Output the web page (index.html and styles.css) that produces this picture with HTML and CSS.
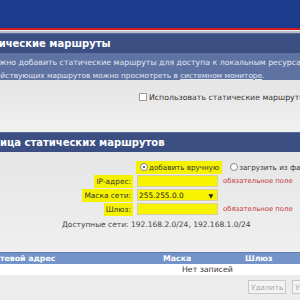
FILE: index.html
```html
<!DOCTYPE html>
<html lang="ru">
<head>
<meta charset="utf-8">
<title>Статические маршруты</title>
<link rel="stylesheet" href="styles.css">
</head>
<body>
<div class="top"></div>
<div class="redline"></div>
<div class="gap"></div>
<section class="sec">
  <h1 class="sec-title">Статические маршруты</h1>
  <div class="sec-desc">
    <p class="d1">Здесь можно добавить статические маршруты для доступа к локальным ресурсам</p>
    <p class="d2">Список действующих маршрутов можно просмотреть в <a href="#">системном мониторе</a>.</p>
  </div>
  <div class="sec-body">
    <label class="check"><span class="cb"></span>Использовать статические маршруты</label>
  </div>
</section>
<section class="sec">
  <h1 class="sec-title t2">Таблица статических маршрутов</h1>
  <div class="form">
    <div class="row">
      <span class="lab"></span>
      <span class="radio hl"><span class="rb on"></span>добавить вручную</span>
      <span class="radio"><span class="rb"></span>загрузить из файла</span>
    </div>
    <div class="row">
      <span class="lab"><span class="hl">IP-адрес:</span></span>
      <span class="inp"></span>
      <span class="req">обязательное поле</span>
    </div>
    <div class="row">
      <span class="lab"><span class="hl">Маска сети:</span></span>
      <span class="inp sel">255.255.0.0<span class="arr">▼</span></span>
    </div>
    <div class="row">
      <span class="lab"><span class="hl">Шлюз:</span></span>
      <span class="inp"></span>
      <span class="req">обязательное поле</span>
    </div>
    <div class="nets">Доступные сети: 192.168.2.0/24, 192.168.1.0/24</div>
  </div>
  <div class="table">
    <div class="thead">
      <span class="c1">Сетевой адрес</span>
      <span class="c2">Маска</span>
      <span class="c3">Шлюз</span>
    </div>
    <div class="tempty">Нет записей</div>
  </div>
  <div class="buttons">
    <button class="btn" disabled>Удалить</button>
    <button class="btn" disabled>Удалить все</button>
  </div>
</section>
</body>
</html>
```
FILE: styles.css
```css
html, body {
  margin: 0;
  padding: 0;
}
body {
  width: 300px;
  height: 300px;
  overflow: hidden;
  background: #ececec;
  font-family: "DejaVu Sans", Verdana, sans-serif;
  font-size: 7.8px;
  color: #333;
}
.top {
  height: 28px;
  background: #1d3b8c;
}
.redline {
  height: 2px;
  background: #d01c1c;
}
.gap {
  height: 1px;
  background: #f2f2f2;
  border-bottom: 2px solid #b9bdc8;
}
.sec-title {
  margin: 0;
  height: 19px;
  line-height: 19px;
  background: #3b4f83;
  color: #fff;
  font-size: 10px;
  font-weight: bold;
  margin-left: -27px;
  white-space: nowrap;
  border-top: 1px solid #5a6b98;
}
.sec-desc {
  background: #5e73a2;
  color: #e3e7f2;
  padding: 3px 0 2px 0;
  height: 22px;
  white-space: nowrap;
}
.sec-desc p {
  margin: 0;
  line-height: 13px;
}
.sec-desc .d1 {
  font-size: 7.8px;
  margin-left: -38px;
}
.sec-desc .d2 {
  font-size: 7.35px;
  margin-left: -39px;
}
.sec-desc a {
  color: #e3e7f2;
}
.sec-body {
  height: 52px;
  background: linear-gradient(#e4e4e4, #f1f1f1);
  padding-left: 139px;
}
.check {
  display: flex;
  align-items: center;
  gap: 2px;
  padding-top: 12px;
  height: 10px;
  white-space: nowrap;
  color: #333;
}
.cb {
  flex: none;
  width: 6px;
  height: 6px;
  border: 1px solid #999;
  background: #fff;
}
.t2 {
  margin-left: -28px;
}
.form {
  padding-top: 8px;
  height: 92px;
  background: linear-gradient(#e6e6e6, #efefef);
  font-size: 7.4px;
}
.row {
  display: flex;
  align-items: center;
  height: 14px;
  gap: 4px;
  white-space: nowrap;
}
.row > * {
  flex: none;
}
.lab {
  width: 133px;
  display: flex;
  justify-content: flex-end;
}
.hl {
  background: #f5f200;
  padding: 2px 2px;
  color: #333;
}
.radio {
  display: flex;
  align-items: center;
  gap: 1px;
  padding: 2px 3px 2px 2px;
  font-size: 7.2px;
}
.radio.hl {
  margin-left: -1px;
  padding: 2px 3px 2px 4px;
}
.radio + .radio {
  margin-left: 2px;
}
.rb {
  width: 6px;
  height: 6px;
  border: 1px solid #888;
  border-radius: 50%;
  background: #fff;
  position: relative;
}
.rb.on::after {
  content: "";
  position: absolute;
  left: 2px;
  top: 2px;
  width: 2px;
  height: 2px;
  background: #333;
  border-radius: 50%;
}
.inp {
  width: 78px;
  height: 10px;
  background: #f8f300;
  border: 1px solid #d8d0a0;
  display: flex;
  align-items: center;
  padding-left: 1px;
}
.sel {
  justify-content: space-between;
  color: #222;
}
.arr {
  font-size: 6px;
  margin-right: 4px;
}
.req {
  color: #c6363a;
  margin-left: 1px;
  font-size: 6.9px;
}
.nets {
  padding-left: 62px;
  margin-top: 4px;
  color: #444;
  white-space: nowrap;
  font-size: 7.5px;
}
.thead {
  display: grid;
  grid-template-columns: 174px 82px auto;
  margin-left: -11px;
  height: 11px;
  line-height: 11px;
  background: #7494c9;
  color: #fff;
  font-weight: bold;
  border-top: 1px solid #5e7cb3;
  white-space: nowrap;
}
.tempty {
  height: 11px;
  line-height: 11px;
  background: #fff;
  padding-left: 182px;
  color: #333;
}
.buttons {
  display: flex;
  gap: 6px;
  padding: 5px 0 0 248px;
  width: 400px;
  white-space: nowrap;
}
.btn {
  font-family: inherit;
  font-size: 7.4px;
  color: #aaa;
  background: #f3f3f3;
  border: 1px solid #c8c8c8;
  height: 14px;
  padding: 0 2px;
  flex: none;
}
```
